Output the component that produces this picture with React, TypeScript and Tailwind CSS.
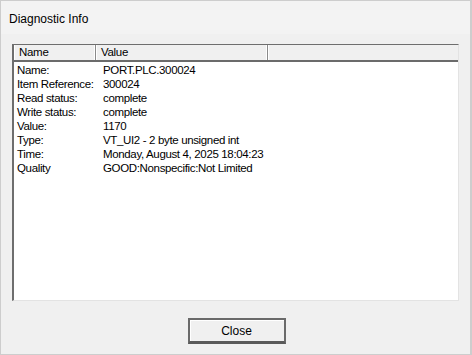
const rows: [string, string][] = [
  ["Name:", "PORT.PLC.300024"],
  ["Item Reference:", "300024"],
  ["Read status:", "complete"],
  ["Write status:", "complete"],
  ["Value:", "1170"],
  ["Type:", "VT_UI2 - 2 byte unsigned int"],
  ["Time:", "Monday, August 4, 2025 18:04:23"],
  ["Quality", "GOOD:Nonspecific:Not Limited"],
];

function HeaderCell({ label, width }: { label: string; width: string }) {
  return (
    <div className={`${width} h-full flex items-center pl-[5px] border-r border-r-[#8a8a8a] shadow-[inset_-1px_0_0_#ffffff,inset_1px_0_0_#ffffff]`}>
      {label}
    </div>
  );
}

export default function App() {
  return (
    <div className="w-[472px] h-[355px] bg-[#f0f0f0] border border-[#cdcdcd] border-r-2 flex flex-col text-black text-[11px] font-['Liberation_Sans',Arial,sans-serif] overflow-hidden">
      <div className="h-[33px] bg-[#f3f3f3] pl-[8px] pt-[9px] text-[12px]">Diagnostic Info</div>

      <div className="px-[11px] pt-[10px]">
        <div className="h-[257px] bg-white border-l-2 border-t border-[#6e6e6e] border-r border-b border-r-[#e3e3e3] border-b-[#e3e3e3] flex flex-col">
          <div className="h-[17px] flex bg-[#f0f0f0] border-b-2 border-[#6b6b6b] leading-none text-[11.5px] tracking-[-0.3px]">
            <HeaderCell label="Name" width="w-[82px]" />
            <HeaderCell label="Value" width="w-[172px]" />
            <div className="flex-1 shadow-[inset_1px_0_0_#ffffff]" />
          </div>
          <div className="flex flex-col pt-[2px]">
            {rows.map(([name, value]) => (
              <div key={name} className="h-[14px] flex items-center leading-none text-[11.5px] tracking-[-0.35px]">
                <div className="w-[86px] pl-[3px] whitespace-nowrap">{name}</div>
                <div className="pl-[3px] whitespace-nowrap">{value}</div>
              </div>
            ))}
          </div>
        </div>
      </div>

      <div className="flex justify-center pt-[17px] pl-[2px]">
        <button className="w-[98px] h-[26px] bg-[#f0f0f0] border-2 border-[#6a6a6a] border-b-[3px] border-b-[#5a5a5a] shadow-[inset_1px_1px_0_#ffffff] flex items-center justify-center text-[12px]">
          Close
        </button>
      </div>
    </div>
  );
}
